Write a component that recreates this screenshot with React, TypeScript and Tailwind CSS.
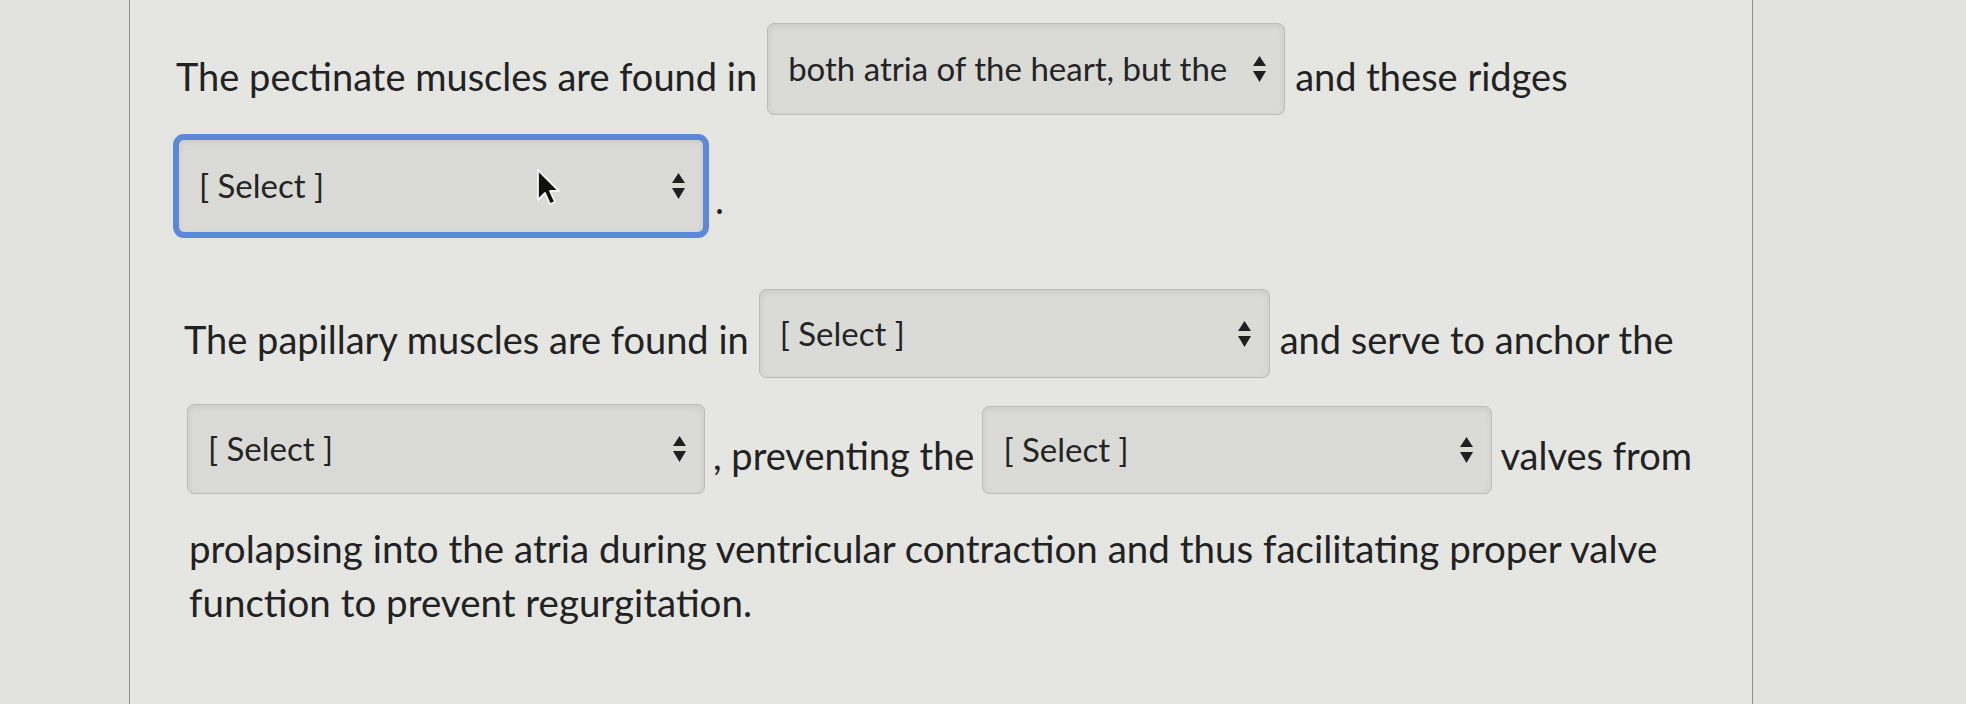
import React from 'react';

function Arrows() {
  return (
    <svg width="13" height="26" viewBox="0 0 13 26" className="shrink-0">
      <path d="M6.5 0 L13 10 L0 10 Z" fill="#1f1f1f" />
      <path d="M0 15 L13 15 L6.5 26 Z" fill="#1f1f1f" />
    </svg>
  );
}

function Cursor() {
  return (
    <svg width="26" height="40" viewBox="0 0 26 40" className="absolute left-[356px] top-[27px]">
      <path
        d="M3 3 L3 33 L10 26 L15 37 L20 35 L15 24 L24 24 Z"
        fill="#111"
        stroke="#f4f4f4"
        strokeWidth="1.8"
        strokeLinejoin="round"
      />
    </svg>
  );
}

function SelectBox({
  value,
  className,
  focused,
}: {
  value: string;
  className: string;
  focused?: boolean;
}) {
  return (
    <div
      className={
        'relative flex shrink-0 items-center bg-[#dadad7] shadow-[inset_0_2px_6px_rgba(0,0,0,0.08)] ' +
        (focused
          ? 'rounded-[11px] border-[6px] border-[#5d87d8] pl-[20px] pr-[18px] '
          : 'rounded-[7px] border border-[#bcbcb9] pl-[20px] pr-[18px] ') +
        className
      }
    >
      <span className="min-w-0 flex-1 overflow-hidden whitespace-nowrap text-[33px] text-[#242424]">
        {value}
      </span>
      <Arrows />
      {focused && <Cursor />}
    </div>
  );
}

export default function App() {
  const text = 'whitespace-nowrap pb-[15px] leading-[1.2] text-[38px] text-[#222]';

  return (
    <div
      className="h-[704px] w-[1966px] overflow-hidden bg-[#e2e2df]"
      style={{ fontFamily: 'Lato, "Open Sans", sans-serif' }}
    >
      <div className="ml-[129px] h-full w-[1624px] border-x border-[#8e8f8d] bg-[#e5e5e2] pt-[23px]">
        {/* first question */}
        <div className="flex items-end gap-[10px] pl-[46px]">
          <span className={text}>The pectinate muscles are found in</span>
          <SelectBox value="both atria of the heart, but the" className="h-[92px] w-[518px] pr-[18px]" />
          <span className={text}>and these ridges</span>
        </div>
        <div className="mt-[19px] flex items-end gap-[6px] pl-[43px]">
          <SelectBox value="[ Select ]" focused className="h-[104px] w-[536px]" />
          <span className={text}>.</span>
        </div>

        {/* second question */}
        <div className="mt-[51px] flex items-end gap-[10px] pl-[54px]">
          <span className={text}>The papillary muscles are found in</span>
          <SelectBox value="[ Select ]" className="h-[89px] w-[511px]" />
          <span className={text}>and serve to anchor the</span>
        </div>
        <div className="mt-[26px] flex items-end gap-[8px] pl-[57px]">
          <SelectBox value="[ Select ]" className="h-[90px] w-[518px]" />
          <span className={text}>, preventing the</span>
          <SelectBox value="[ Select ]" className="h-[88px] w-[510px]" />
          <span className={text}>valves from</span>
        </div>
        <div className="mt-[27px] pl-[59px] text-[38.5px] leading-[54px] text-[#222]">
          <p className="whitespace-nowrap">
            prolapsing into the atria during ventricular contraction and thus facilitating proper valve
          </p>
          <p className="whitespace-nowrap">function to prevent regurgitation.</p>
        </div>
      </div>
    </div>
  );
}
